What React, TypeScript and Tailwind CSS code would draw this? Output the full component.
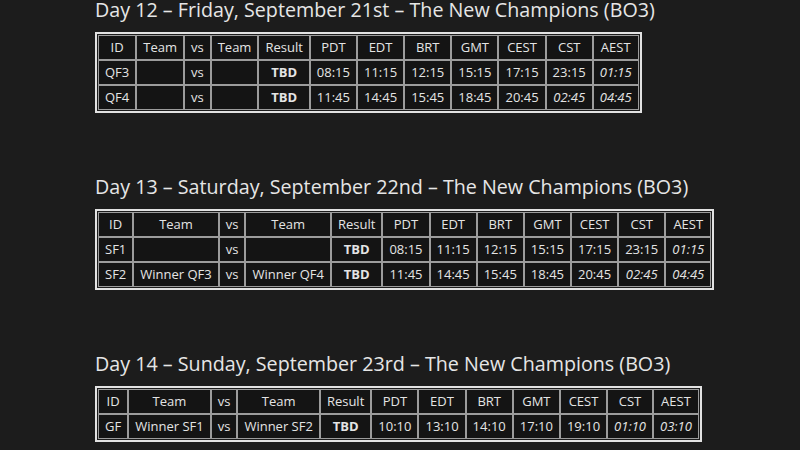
type Cell = { t: string; b?: boolean; i?: boolean };

const head = ["ID", "Team", "vs", "Team", "Result", "PDT", "EDT", "BRT", "GMT", "CEST", "CST", "AEST"];

const row = (id: string, a: string, b: string, times: string[], italicFrom: number): Cell[] => [
  { t: id },
  { t: a },
  { t: "vs" },
  { t: b },
  { t: "TBD", b: true },
  ...times.map((t, i) => ({ t, i: i >= italicFrom })),
];

const days = [
  {
    title: "Day 12 – Friday, September 21st – The New Champions (BO3)",
    rows: [
      row("QF3", "", "", ["08:15", "11:15", "12:15", "15:15", "17:15", "23:15", "01:15"], 6),
      row("QF4", "", "", ["11:45", "14:45", "15:45", "18:45", "20:45", "02:45", "04:45"], 5),
    ],
  },
  {
    title: "Day 13 – Saturday, September 22nd – The New Champions (BO3)",
    rows: [
      row("SF1", "", "", ["08:15", "11:15", "12:15", "15:15", "17:15", "23:15", "01:15"], 6),
      row("SF2", "Winner QF3", "Winner QF4", ["11:45", "14:45", "15:45", "18:45", "20:45", "02:45", "04:45"], 5),
    ],
  },
  {
    title: "Day 14 – Sunday, September 23rd – The New Champions (BO3)",
    rows: [row("GF", "Winner SF1", "Winner SF2", ["10:10", "13:10", "14:10", "17:10", "19:10", "01:10", "03:10"], 5)],
  },
];

function Schedule({ title, rows }: { title: string; rows: Cell[][] }) {
  return (
    <section className="mb-[64px]">
      <h2 className="text-[19.7px] leading-[20px] text-[#e6e6e6] mb-[12px] whitespace-nowrap">{title}</h2>
      <table className="border-separate border-spacing-0 border-2 border-[#e2e2e2] p-px text-[13px] leading-[17px] text-[#e4e4e4]">
        <tbody>
          <tr>
            {head.map((h, i) => (
              <td key={i} className="border border-[#9c9c9c] bg-[#141414] px-[6px] py-[3px] text-center whitespace-nowrap">
                {h}
              </td>
            ))}
          </tr>
          {rows.map((r, ri) => (
            <tr key={ri}>
              {r.map((c, ci) => (
                <td
                  key={ci}
                  className={`border border-[#9c9c9c] bg-[#141414] px-[6px] py-[3px] text-center whitespace-nowrap ${c.b ? "font-bold" : ""} ${c.i ? "italic" : ""}`}
                >
                  {c.t}
                </td>
              ))}
            </tr>
          ))}
        </tbody>
      </table>
    </section>
  );
}

export default function App() {
  return (
    <div className="w-[800px] h-[450px] overflow-hidden bg-[#1c1c1c] pl-[95px] font-['Open_Sans',sans-serif]">
      {days.map((d, i) => (
        <Schedule key={i} title={d.title} rows={d.rows} />
      ))}
    </div>
  );
}
